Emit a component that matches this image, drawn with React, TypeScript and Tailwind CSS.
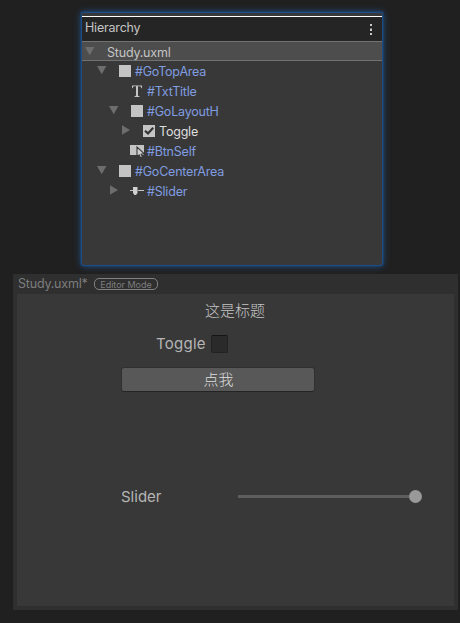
import React from "react";

type Icon = "square" | "text" | "check" | "button" | "slider";
type Fold = "open" | "closed" | "none";

function Arrow({ fold }: { fold: Fold }) {
  return (
    <svg className="h-5 w-3 shrink-0" viewBox="0 0 12 20" fill="#6d6d6d">
      {fold === "open" && <path d="M2 5h9.400L6.700 13.300z" />}
      {fold === "closed" && <path d="M3 4.300v9.400L11 9z" />}
    </svg>
  );
}

function NodeIcon({ icon }: { icon: Icon }) {
  return (
    <svg className="h-5 w-4 shrink-0" viewBox="0 0 16 20">
      {icon === "square" && <path fill="#c4c4c4" d="M2 4h12v12H2z" />}
      {icon === "text" && (
        <path
          fill="#c4c4c4"
          d="M3 4.400h10v2.900h-.7c-.2-1.400-.7-2-1.900-2H9v9c0 .7.300.9 1.500.9v.8h-5v-.8c1.200 0 1.500-.2 1.500-.9v-9H5.600c-1.200 0-1.700.6-1.900 2H3z"
        />
      )}
      {icon === "check" && (
        <>
          <path fill="#c4c4c4" d="M2 4h12v12H2z" />
          <path fill="none" stroke="#333" strokeWidth="2.200" d="M4 9.700l3 2.700L12.200 6.700" />
        </>
      )}
      {icon === "button" && (
        <>
          <path fill="#c4c4c4" d="M1 4h14v10H1z" />
          <path
            fill="#d0d0d0"
            stroke="#383838"
            strokeWidth="1.100"
            d="M8 6v9.600l2.200-1.700 1.300 2.800 1.900-.8-1.200-2.800 2.900-.4z"
          />
        </>
      )}
      {icon === "slider" && (
        <>
          <path fill="#c4c4c4" d="M1 9h3v1H1zM9 9h6v1H9z" />
          <path fill="#d0d0d0" d="M4 6h4.500v6L7 14H5.500L4 12z" />
        </>
      )}
    </svg>
  );
}

const rows: { pad: string; fold: Fold; icon: Icon; label: string; color: string }[] = [
  { pad: "pl-[13px]", fold: "open", icon: "square", label: "#GoTopArea", color: "text-[#809de0]" },
  { pad: "pl-[25px]", fold: "none", icon: "text", label: "#TxtTitle", color: "text-[#809de0]" },
  { pad: "pl-[25px]", fold: "open", icon: "square", label: "#GoLayoutH", color: "text-[#809de0]" },
  { pad: "pl-[37px]", fold: "closed", icon: "check", label: "Toggle", color: "text-[#dedede]" },
  { pad: "pl-[25px]", fold: "none", icon: "button", label: "#BtnSelf", color: "text-[#809de0]" },
  { pad: "pl-[13px]", fold: "open", icon: "square", label: "#GoCenterArea", color: "text-[#809de0]" },
  { pad: "pl-[25px]", fold: "closed", icon: "slider", label: "#Slider", color: "text-[#809de0]" },
];

function Hierarchy() {
  return (
    <section className="ml-[82px] h-[252px] w-[300px] rounded-b-[2px] bg-[#383838] pt-[3px] tracking-[-0.2px] shadow-[0_0_2px_0.5px_#1d5597,0_0_7px_1px_#214f85]">
      <header className="flex h-[25px] items-start justify-between border-t border-white bg-[#252525] pl-[3px] pr-[9px] text-[#c4c4c4]">
        <span className="pt-[1px] leading-5">Hierarchy</span>
        <svg className="mt-[7px] h-3 w-[4px]" viewBox="0 0 4 12" fill="#c8c8c8">
          <path d="M1 0h2v2H1zM1 4.500h2v2.500H1zM1 9h2v2H1z" />
        </svg>
      </header>
      <div className="flex h-5 items-center border-y border-[#727272] bg-[#4d4d4d] text-[#c4c4c4]">
        <span className="ml-px flex pt-px">
          <Arrow fold="open" />
        </span>
        <span className="ml-3 pt-[4px] leading-[18px]">Study.uxml</span>
      </div>
      {rows.map((r) => (
        <div key={r.label} className={`flex h-5 items-center ${r.pad}`}>
          <Arrow fold={r.fold} />
          <span className="ml-[10px] flex">
            <NodeIcon icon={r.icon} />
          </span>
          <span className={`ml-[2px] pt-[2px] leading-[18px] ${r.color}`}>{r.label}</span>
        </div>
      ))}
    </section>
  );
}

function Viewport() {
  return (
    <section className="ml-[13px] mt-[9px] flex h-[336px] w-[445px] flex-col bg-[#2f2f2f] px-1 pb-1">
      <header className="flex h-5 shrink-0 items-center pl-px text-[#7d7d7d]">
        <span className="w-[70px] tracking-[-0.2px]">Study.uxml*</span>
        <span className="ml-[6px] flex h-3 w-16 items-center justify-center rounded-[5px] border border-[#818181] text-[9px] leading-none">
          Editor Mode
        </span>
      </header>
      <div className="flex grow flex-col bg-[#383838] text-[15px] text-[#b5b5b5]">
        <div className="mt-[7px] h-5 pl-[188px] font-light leading-5 text-[#c4c4c4]">这是标题</div>
        <div className="mt-[14px] flex h-[18px] items-center pl-[139px]">
          <span className="w-[50px] tracking-[0.250px]">Toggle</span>
          <span className="ml-[5px] h-[18px] w-[17px] rounded-[2px] border border-[#222] border-t-[#141414] bg-[#2a2a2a]" />
        </div>
        <button className="ml-[104px] mt-[14px] h-[25px] w-[194px] rounded-[3px] border border-[#303030] border-b-[#242424] bg-[#585858] pl-px pt-px font-light leading-[22px] text-[#dedede]">
          点我
        </button>
        <div className="mt-[92px] flex h-6 items-center pl-[104px]">
          <span className="w-[117px] pt-[2px]">Slider</span>
          <span className="h-[3px] w-[171px] bg-[#5e5e5e]" />
          <span className="h-[13px] w-[13px] rounded-full bg-[#999]" />
        </div>
      </div>
    </section>
  );
}

export default function App() {
  return (
    <main className="h-[623px] w-[460px] overflow-hidden bg-[#202020] pt-[13px] font-['Inter','Noto_Sans_CJK_SC',sans-serif] text-[12.500px]">
      <Hierarchy />
      <Viewport />
    </main>
  );
}
